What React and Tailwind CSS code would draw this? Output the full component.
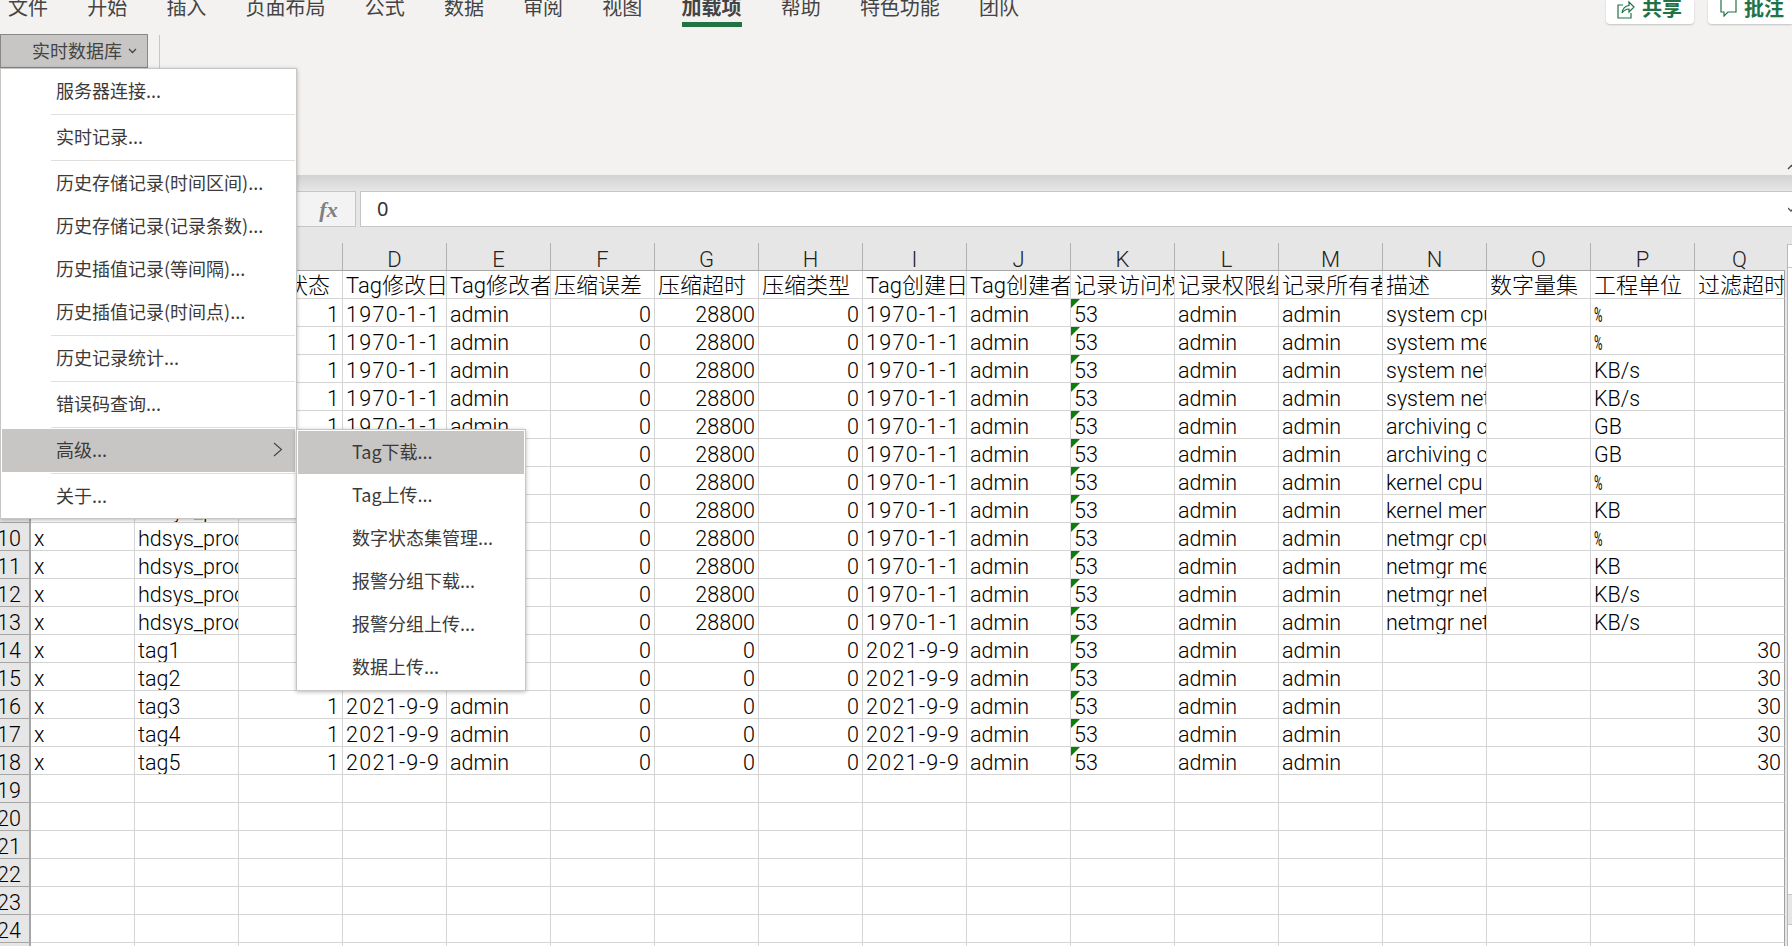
import React from "react";

const tabs = ["文件", "开始", "插入", "页面布局", "公式", "数据", "审阅", "视图", "加载项", "帮助", "特色功能", "团队"];
const columns = ["A", "B", "C", "D", "E", "F", "G", "H", "I", "J", "K", "L", "M", "N", "O", "P", "Q"];
const headers = ["类型", "Tag名称", "压缩状态", "Tag修改日期", "Tag修改者", "压缩误差", "压缩超时", "压缩类型", "Tag创建日期", "Tag创建者", "记录访问权限", "记录权限组", "记录所有者", "描述", "数字量集", "工程单位", "过滤超时"];

const descs = [
  ["system cpu usage", "%"],
  ["system memory usage", "%"],
  ["system net in", "KB/s"],
  ["system net out", "KB/s"],
  ["archiving current size", "GB"],
  ["archiving capacity", "GB"],
  ["kernel cpu", "%"],
  ["kernel memory", "KB"],
  ["netmgr cpu", "%"],
  ["netmgr memory", "KB"],
  ["netmgr net in", "KB/s"],
  ["netmgr net out", "KB/s"],
];

const sysRows = descs.map(([d, u], i) => ({
  b: "hdsys_proc_" + i, date: "1970-1-1", g: 28800, desc: d, unit: u, q: "",
}));
const tagRows = [1, 2, 3, 4, 5].map((n) => ({
  b: "tag" + n, date: "2021-9-9", g: 0, desc: "", unit: "", q: 30,
}));
const rows = [...sysRows, ...tagRows];

const menuItems = [
  { label: "服务器连接...", sep: true },
  { label: "实时记录...", sep: true },
  { label: "历史存储记录(时间区间)..." },
  { label: "历史存储记录(记录条数)..." },
  { label: "历史插值记录(等间隔)..." },
  { label: "历史插值记录(时间点)...", sep: true },
  { label: "历史记录统计...", sep: true },
  { label: "错误码查询...", sep: true },
  { label: "高级...", sep: true, active: true, arrow: true },
  { label: "关于..." },
];

const subItems = ["Tag下载...", "Tag上传...", "数字状态集管理...", "报警分组下载...", "报警分组上传...", "数据上传..."];

const Cell = ({ children, right, last, mark, date, head }) => (
  <div
    className={`relative h-[28px] shrink-0 overflow-hidden whitespace-nowrap border-b border-r border-b-[#d4d4d4] px-[3px] text-black ${
      head ? "text-[22px] leading-[30px]" : "text-[21.5px] leading-[32px]"
    } ${last ? "w-[90px] border-r-[#a0a0a0]" : "w-[104px] border-r-[#d4d4d4]"} ${
      right ? "text-right" : "text-left"
    } ${date ? "tracking-[1.3px]" : ""}`}
  >
    {mark && (
      <span className="absolute left-0 top-0 h-0 w-0 border-r-[9px] border-t-[9px] border-r-transparent border-t-[#0a7d0a]" />
    )}
    {children}
  </div>
);

const RowHead = ({ n }) => (
  <div className="h-[28px] w-[31px] shrink-0 overflow-hidden whitespace-nowrap border-b border-r-[2px] border-b-[#a6a6a6] border-r-[#a6a6a6] bg-[#e6e6e6] text-[21.5px] leading-[32px] text-black">
    <span className="-ml-[3px] block">{n}</span>
  </div>
);

const Unit = ({ value }) =>
  value === "%" ? (
    <span className="inline-block origin-left scale-x-[0.55] text-[21px] font-normal">%</span>
  ) : (
    value
  );

const Ribbon = () => (
  <div className="relative h-[175px] bg-[#f3f2f1] font-['Noto_Sans_CJK_SC',sans-serif]">
    <div className="flex h-[34px] items-start pl-[8px] text-[20px] text-[#444444]">
      <div className="flex gap-[39.2px]">
        {tabs.map((t) => (
          <div key={t} className="flex flex-col">
            <span className={`-mt-[8px] leading-[30px] ${t === "加载项" ? "font-bold" : ""}`}>{t}</span>
            {t === "加载项" && <span className="h-[5px] bg-[#217346]" />}
          </div>
        ))}
      </div>
      <div className="ml-auto flex gap-[14px] font-bold text-[#217346]">
        <div className="flex h-[24px] w-[88px] items-center gap-[7px] overflow-hidden rounded-b-[4px] bg-white pl-[11px] shadow-[0_1px_2px_rgba(0,0,0,0.2)]">
          <svg width="18" height="19" viewBox="0 0 18 19" fill="none" stroke="#217346" strokeWidth="1.2" className="shrink-0 -mt-[6px]">
            <path d="M6 5H1v13h13v-5" />
            <path d="M5 13c.6-4.5 3.4-7 7-7.5V2l5 5-5 5V9c-3 0-5 1.300-7 4z" />
          </svg>
          <span className="-mt-[8px]">共享</span>
        </div>
        <div className="flex h-[24px] w-[84px] items-center gap-[7px] overflow-hidden rounded-bl-[4px] bg-white pl-[12px] shadow-[0_1px_2px_rgba(0,0,0,0.2)]">
          <svg width="17" height="17" viewBox="0 0 17 17" fill="none" stroke="#217346" strokeWidth="1.2" className="shrink-0 -mt-[8px]">
            <path d="M1 0v12h3v4l4-4h8V0" />
          </svg>
          <span className="-mt-[8px]">批注</span>
        </div>
      </div>
    </div>
    <div className="flex h-[34px] items-center text-[18px] text-[#444444]">
      <div className="flex h-[34px] w-[148px] items-center border border-[#8a8886] bg-[#c8c6c4] pl-[31px]">
        <span className="-mt-[2px]">实时数据库</span>
        <svg width="9" height="6" viewBox="0 0 9 6" fill="none" stroke="#444444" strokeWidth="1.3" className="ml-[6px]">
          <path d="M1 1l3.5 3.5L8 1" />
        </svg>
      </div>
      <div className="ml-[11px] h-[33px] w-px bg-[#c8c6c4]" />
    </div>
    <svg width="8" height="6" viewBox="0 0 8 6" fill="none" stroke="#444444" strokeWidth="1.3" className="absolute right-[-3px] top-[164px]">
      <path d="M1 5l3.500-3.500L8 5" />
    </svg>
  </div>
);

const FormulaBar = () => (
  <div className="relative h-[68px] bg-[#e6e6e6] bg-gradient-to-b from-[#d2d2d2] to-[#e6e6e6] bg-[length:100%_16px] bg-no-repeat pt-[16px]">
    <div className="flex h-[36px] items-stretch gap-[4px] pl-[296px]">
      <div className="flex w-[60px] items-center justify-center border-y border-r border-[#c6c6c6] bg-[#f3f3f3] pl-[6px] font-['Liberation_Serif',serif] text-[22px] font-bold italic text-[#808080]">
        fx
      </div>
      <div className="flex flex-1 items-center border-y border-l border-[#c6c6c6] bg-white pl-[16px] text-[20px] text-[#333333]">
        0
      </div>
    </div>
    <svg width="6" height="5" viewBox="0 0 6 5" fill="none" stroke="#555555" strokeWidth="1.3" className="absolute right-[-2px] top-[32px]">
      <path d="M0 1l3 3 3-3" />
    </svg>
  </div>
);

const Sheet = () => (
  <div className="flex font-['Roboto','Noto_Sans_CJK_SC',sans-serif] font-light">
    <div className="w-[1785px] shrink-0">
      <div className="flex h-[28px] border-b border-b-[#a6a6a6] bg-[#e6e6e6]">
        <div className="w-[31px] shrink-0 border-r border-[#b1b1b1]" />
        {columns.map((c) => (
          <div
            key={c}
            className={`h-[27px] shrink-0 border-r border-[#b1b1b1] text-center text-[22px] leading-[34px] text-[#222222] ${
              c === "Q" ? "w-[90px] border-r-transparent" : "w-[104px]"
            }`}
          >
            {c}
          </div>
        ))}
      </div>
      <div className="flex">
        <RowHead n={1} />
        {headers.map((h, i) => (
          <Cell key={h} head last={i === 16}>
            {h}
          </Cell>
        ))}
      </div>
      {rows.map((r, i) => (
        <div key={r.b} className="flex">
          <RowHead n={i + 2} />
          <Cell>x</Cell>
          <Cell>{r.b}</Cell>
          <Cell right>1</Cell>
          <Cell date>{r.date}</Cell>
          <Cell>admin</Cell>
          <Cell right>0</Cell>
          <Cell right>{r.g}</Cell>
          <Cell right>0</Cell>
          <Cell date>{r.date}</Cell>
          <Cell>admin</Cell>
          <Cell mark>53</Cell>
          <Cell>admin</Cell>
          <Cell>admin</Cell>
          <Cell>{r.desc}</Cell>
          <Cell />
          <Cell>
            <Unit value={r.unit} />
          </Cell>
          <Cell right last>
            {r.q}
          </Cell>
        </div>
      ))}
      {[19, 20, 21, 22, 23, 24, 25].map((n) => (
        <div key={n} className="flex">
          <RowHead n={n} />
          {columns.map((c) => (
            <Cell key={c} last={c === "Q"} />
          ))}
        </div>
      ))}
    </div>
    <div className="flex h-[703px] flex-1 flex-col bg-[#e6e6e6] pl-[2px]">
      <div className="mt-px flex flex-1 flex-col border-l border-[#b8b8b8]">
        <div className="h-[24px] border-b border-t border-[#c6c6c6] bg-white" />
        <div className="h-[627px] border-b border-[#c6c6c6] bg-white" />
        <div className="h-[29px] bg-[#e6e6e6]" />
        <div className="flex-1 border-t border-[#c6c6c6] bg-white" />
      </div>
    </div>
  </div>
);

const MenuRow = ({ label, active, arrow, pl }) => (
  <div className={`relative flex h-[43px] items-center whitespace-nowrap ${pl} ${active ? "bg-[#c8c6c4]" : ""}`}>
    <span className="-mt-[2px]">{label}</span>
    {arrow && (
      <svg width="10" height="15" viewBox="0 0 10 15" fill="none" stroke="#444444" strokeWidth="1.1" className="absolute right-[12px] top-[13px]">
        <path d="M1 1l7.500 6.500L1 14" />
      </svg>
    )}
  </div>
);

const Menus = () => (
  <div className="font-['Noto_Sans_CJK_SC',sans-serif] text-[18px] text-[#3b3a39]">
    <div className="absolute left-0 top-[68px] h-[451px] w-[297px] border border-[#c8c6c4] bg-white py-px pl-px pr-[1px] shadow-[0_1px_4px_rgba(0,0,0,0.28)]">
      {menuItems.map((m) => (
        <div key={m.label}>
          <MenuRow label={m.label} active={m.active} arrow={m.arrow} pl="pl-[54px]" />
          {m.sep && (
            <div className="flex h-[3px] items-center pl-[49px]">
              <div className="h-px flex-1 bg-[#e1dfdd]" />
            </div>
          )}
        </div>
      ))}
    </div>
    <div className="absolute left-[296px] top-[429px] w-[230px] border border-[#c8c6c4] bg-white px-px pb-px pt-[1px] shadow-[0_1px_4px_rgba(0,0,0,0.28)]">
      {subItems.map((s, i) => (
        <MenuRow key={s} label={s} active={i === 0} pl="pl-[54px]" />
      ))}
    </div>
  </div>
);

const App = () => {
  return (
    <div className="relative h-[946px] w-[1792px] overflow-hidden bg-white">
      <Ribbon />
      <FormulaBar />
      <Sheet />
      <Menus />
    </div>
  );
};

export default App;
